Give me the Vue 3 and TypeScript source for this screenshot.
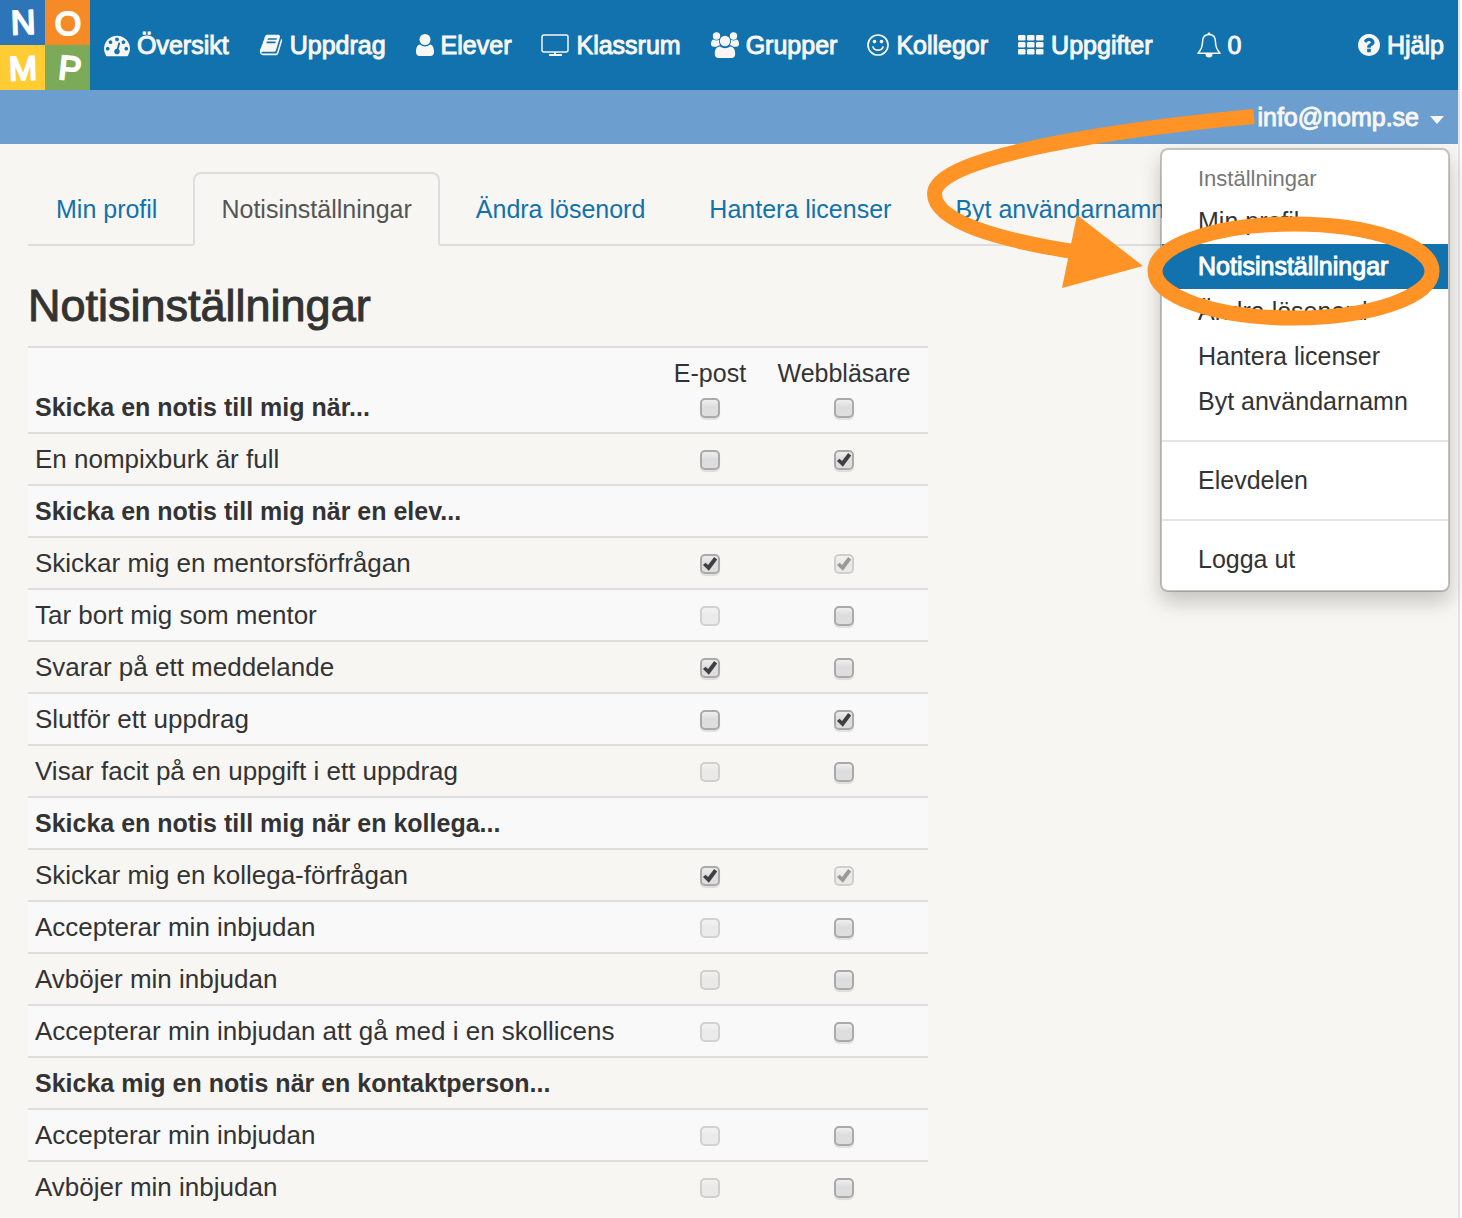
<script setup lang="ts">
import { reactive } from 'vue'

interface Box {
  checked: boolean
  disabled?: boolean
}
interface Row {
  label: string
  heading?: boolean
  email?: Box
  web?: Box
}

const nav = [
  { id: 'gauge', label: 'Översikt', width: 26 },
  { id: 'book', label: 'Uppdrag', width: 24 },
  { id: 'user', label: 'Elever', width: 18 },
  { id: 'screen', label: 'Klassrum', width: 28 },
  { id: 'group', label: 'Grupper', width: 28 },
  { id: 'smile', label: 'Kollegor', width: 22 },
  { id: 'grid', label: 'Uppgifter', width: 26 },
  { id: 'bell', label: '0', width: 24 },
]

const tabs = ['Min profil', 'Notisinställningar', 'Ändra lösenord', 'Hantera licenser', 'Byt användarnamn']
const active = 'Notisinställningar'

const off = (): Box => ({ checked: false })
const on = (): Box => ({ checked: true })
const locked = (checked = false): Box => ({ checked, disabled: true })

const all = reactive({ email: false, web: false })
const rows = reactive<Row[]>([
  { label: 'En nompixburk är full', email: off(), web: on() },
  { label: 'Skicka en notis till mig när en elev...', heading: true },
  { label: 'Skickar mig en mentorsförfrågan', email: on(), web: locked(true) },
  { label: 'Tar bort mig som mentor', email: locked(), web: off() },
  { label: 'Svarar på ett meddelande', email: on(), web: off() },
  { label: 'Slutför ett uppdrag', email: off(), web: on() },
  { label: 'Visar facit på en uppgift i ett uppdrag', email: locked(), web: off() },
  { label: 'Skicka en notis till mig när en kollega...', heading: true },
  { label: 'Skickar mig en kollega-förfrågan', email: on(), web: locked(true) },
  { label: 'Accepterar min inbjudan', email: locked(), web: off() },
  { label: 'Avböjer min inbjudan', email: locked(), web: off() },
  { label: 'Accepterar min inbjudan att gå med i en skollicens', email: locked(), web: off() },
  { label: 'Skicka mig en notis när en kontaktperson...', heading: true },
  { label: 'Accepterar min inbjudan', email: locked(), web: off() },
  { label: 'Avböjer min inbjudan', email: locked(), web: off() },
])
</script>

<template>
  <div class="page">
    <header>
      <nav class="topbar" aria-label="Huvudmeny">
        <a class="logo" href="#" aria-label="Nomp">
          <svg width="90" height="90" viewBox="0 0 90 90">
            <rect width="45" height="45" fill="#2e74b9" />
            <rect x="45" width="45" height="45" fill="#f68a27" />
            <rect y="45" width="45" height="45" fill="#ffcd33" />
            <rect x="45" y="45" width="45" height="45" fill="#7caa58" />
            <g class="letters">
              <text x="23" y="34" transform="rotate(-2 23 22)">N</text>
              <text x="68" y="35">O</text>
              <text x="23" y="80" transform="rotate(-2 23 68)">M</text>
              <text x="70" y="80" transform="rotate(6 70 68)">P</text>
            </g>
          </svg>
        </a>
        <a v-for="item in nav" :key="item.id" class="navlink" :class="item.id" href="#">
          <svg v-if="item.id === 'gauge'" :width="item.width" height="26" viewBox="0 0 1792 1792"><path d="M384 1152q0-53-37.500-90.500t-90.500-37.500-90.500 37.500-37.500 90.500 37.500 90.500 90.500 37.500 90.500-37.500 37.500-90.500zm192-448q0-53-37.500-90.500t-90.500-37.500-90.500 37.500-37.500 90.500 37.500 90.500 90.500 37.500 90.500-37.500 37.500-90.500zm428 481l101-382q6-26-7.500-48.500t-38.500-29.500-48 6.500-30 39.500l-101 382q-60 5-107 43.500t-63 98.500q-20 77 20 146t117 89 146-20 89-117q16-60-6-117t-72-91zm660-33q0-53-37.500-90.500t-90.500-37.500-90.500 37.500-37.500 90.500 37.500 90.500 90.500 37.500 90.500-37.500 37.500-90.500zm-640-640q0-53-37.500-90.500t-90.500-37.500-90.500 37.500-37.500 90.500 37.500 90.500 90.500 37.500 90.500-37.500 37.500-90.500zm448 192q0-53-37.500-90.500t-90.500-37.500-90.500 37.500-37.500 90.500 37.500 90.500 90.500 37.500 90.500-37.500 37.500-90.500zm320 448q0 261-141 483-19 29-54 29h-1402q-35 0-54-29-141-221-141-483 0-182 71-348t191-286 286-191 348-71 348 71 286 191 191 286 71 348z" /></svg>
          <svg v-else-if="item.id === 'book'" :width="item.width" height="24" viewBox="64 0 1664 1792"><path d="M1703 478q40 57 18 129l-275 906q-19 64-76.500 107.500t-122.500 43.500h-923q-77 0-148.500-53.500t-99.500-131.500q-24-67-2-127 0-4 3-27t4-37q1-8-3-21.500t-3-19.500q2-11 8-21t16.500-23.500 16.500-23.500q23-38 45-91.500t30-91.500q3-10 .5-30t-.5-28q3-11 17-28t17-23q21-36 42-92t25-90q1-9-2.500-32t.5-28q4-13 22-30.500t22-22.500q19-26 42.500-84.500t27.500-96.500q1-8-3-25.500t-2-26.500q2-8 9-18t18-23 17-21q8-12 16.500-30.500t15-35 16-36 19.500-32 26.500-23.500 36-11.500 47.500 5.500l-1 3q38-9 51-9h761q74 0 114 56t18 130l-274 906q-36 119-71.500 153.500t-128.500 34.500h-869q-27 0-38 15-11 16-1 43 24 70 144 70h923q29 0 56-15.500t35-41.500l300-987q7-22 5-57 38 15 59 43zm-1064 2q-4 13 2 22.500t20 9.500h608q13 0 25.500-9.500t16.500-22.500l21-64q4-13-2-22.500t-20-9.500h-608q-13 0-25.500 9.500t-16.500 22.500zm-83 256q-4 13 2 22.500t20 9.500h608q13 0 25.500-9.500t16.500-22.500l21-64q4-13-2-22.500t-20-9.500h-608q-13 0-25.500 9.500t-16.500 22.500z" /></svg>
          <svg v-else-if="item.id === 'user'" :width="item.width" height="22" viewBox="0 0 18 22"><circle cx="9" cy="5.500" r="5.500" /><path d="M4 10.500c3 2.600 7 2.600 10 0 3 .4 4 3.500 4 7.500 0 2.400-1.500 4-3.500 4h-11C1.500 22 0 20.400 0 18c0-4 1-7.100 4-7.500z" /></svg>
          <svg v-else-if="item.id === 'screen'" :width="item.width" height="22" viewBox="0 0 28 22"><rect x="1" y="1" width="26" height="17" rx="2" fill="none" stroke="#f8f6f2" stroke-width="1.500" /><path d="M13 18h2v2h6v2H8v-2h5z" /></svg>
          <svg v-else-if="item.id === 'group'" :width="item.width" height="26" viewBox="0 0 28 26"><circle cx="5.500" cy="4" r="3.700" /><circle cx="22.500" cy="4" r="3.700" /><path d="M2.500 7.500c2 1.300 4 1.200 5.600.3-.3 2 .1 3.800 1.200 5.400-1.500 0-2.700.6-3.700 1.600H3c-2 0-3-1-3-2.700 0-2.500.7-4.200 2.500-4.600zM25.500 7.500c-2 1.300-4 1.200-5.600.3.300 2-.1 3.800-1.200 5.400 1.500 0 2.700.6 3.700 1.600H25c2 0 3-1 3-2.700 0-2.500-.7-4.200-2.500-4.600z" /><circle cx="14" cy="9" r="5.200" /><path d="M9 14.600c3 2.300 7 2.300 10 0 4 0 5.200 3.800 5.200 7.400 0 2.400-1.500 4-3.700 4h-13C5.300 26 3.800 24.400 3.800 22c0-3.600 1.200-7.400 5.200-7.400z" /></svg>
          <svg v-else-if="item.id === 'smile'" :width="item.width" height="22" viewBox="0 0 22 22"><circle cx="11" cy="11" r="10" fill="none" stroke="#f8f6f2" stroke-width="1.700" /><circle cx="7.500" cy="7.600" r="1.800" /><circle cx="14.500" cy="7.600" r="1.800" /><path d="M6 13c1.500 4.200 8.500 4.200 10 0" fill="none" stroke="#f8f6f2" stroke-width="1.700" stroke-linecap="round" /></svg>
          <svg v-else-if="item.id === 'grid'" :width="item.width" height="20" viewBox="0 0 26 20"><template v-for="y in 3" :key="y"><rect v-for="x in 3" :key="x" :x="(x - 1) * 9" :y="(y - 1) * 7" width="7.500" height="5.500" rx="1.300" /></template></svg>
          <svg v-else :width="item.width" height="26" viewBox="0 0 24 26"><path d="M12 2.500c-4.500 0-6.500 3.500-6.500 7.500 0 6-2 8.500-4.500 11.200h22c-2.500-2.700-4.500-5.200-4.500-11.200 0-4-2-7.500-6.500-7.500z" fill="none" stroke="#f8f6f2" stroke-width="1.500" stroke-linejoin="round" /><circle cx="12" cy="1.800" r="1.400" /><path d="M8.500 22h7a3.500 3.500 0 0 1-7 0z" /></svg>
          <span>{{ item.label }}</span>
        </a>
        <a class="navlink help" href="#">
          <svg width="22" height="22" viewBox="128 128 1536 1536"><path d="M1024 1376v-192q0-14-9-23t-23-9h-192q-14 0-23 9t-9 23v192q0 14 9 23t23 9h192q14 0 23-9t9-23zm256-672q0-88-55.500-163t-138.500-116-170-41q-243 0-371 213-15 24 8 42l132 100q7 6 19 6 16 0 25-12 53-68 86-92 34-24 86-24 48 0 85.500 26t37.500 59q0 38-20 61t-68 45q-63 28-115.500 86.500t-52.500 125.500v36q0 14 9 23t23 9h192q14 0 23-9t9-23q0-19 21.500-49.500t54.500-49.500q32-18 49-28.500t46-35 44.500-48 28-60.500 12.500-81zm384 192q0 209-103 385.500t-279.500 279.500-385.500 103-385.500-103-279.500-279.500-103-385.500 103-385.500 279.500-279.500 385.500-103 385.500 103 279.500 279.500 103 385.500z" /></svg>
          <span>Hjälp</span>
        </a>
      </nav>
      <div class="userbar">
        <button type="button" class="account" aria-haspopup="true" aria-expanded="true">
          info@nomp.se<i class="caret"></i>
        </button>
        <div class="menu">
          <h2>Inställningar</h2>
          <ul>
            <li v-for="t in tabs" :key="t"><a href="#" :class="{ active: t === active }">{{ t }}</a></li>
          </ul>
          <hr />
          <ul><li><a href="#">Elevdelen</a></li></ul>
          <hr />
          <ul><li><a href="#">Logga ut</a></li></ul>
        </div>
      </div>
    </header>

    <main>
      <ul class="tabs">
        <li v-for="t in tabs" :key="t"><a href="#" :class="{ active: t === active }">{{ t }}</a></li>
      </ul>

      <h1>Notisinställningar</h1>

      <table>
        <thead>
          <tr>
            <th class="name" scope="col">Skicka en notis till mig när...</th>
            <th class="email" scope="col">
              <label for="all-email">E-post</label>
              <span class="cell"><input id="all-email" v-model="all.email" type="checkbox" /></span>
            </th>
            <th class="web" scope="col">
              <label for="all-web">Webbläsare</label>
              <span class="cell"><input id="all-web" v-model="all.web" type="checkbox" /></span>
            </th>
          </tr>
        </thead>
        <tbody>
          <tr v-for="(row, i) in rows" :key="i">
            <th v-if="row.heading" colspan="3" scope="colgroup">{{ row.label }}</th>
            <template v-else>
              <td>{{ row.label }}</td>
              <td><span class="cell"><input v-if="row.email" v-model="row.email.checked" type="checkbox" :disabled="row.email.disabled" :aria-label="`${row.label}, e-post`" /></span></td>
              <td><span class="cell"><input v-if="row.web" v-model="row.web.checked" type="checkbox" :disabled="row.web.disabled" :aria-label="`${row.label}, webbläsare`" /></span></td>
            </template>
          </tr>
        </tbody>
      </table>
    </main>

    <svg class="pointer" width="540" height="240" viewBox="918 100 540 240" aria-hidden="true">
      <g fill="none" stroke="#ff9326" stroke-width="15">
        <path d="M1254 116.500C1130 128 934 155 934.500 194C935 222 1000 240 1076 252" />
        <ellipse cx="1293.500" cy="271" rx="138.500" ry="47" />
      </g>
      <path d="M1077 215L1143 266L1062 288z" fill="#ff9326" />
    </svg>
  </div>
</template>

<style>
body {
  background: #fbfbfb;
}
</style>

<style scoped>
.page {
  position: relative;
  margin-right: 2px;
  padding-bottom: 6px;
  border-right: 2px solid #e4e4e6;
  background: #f7f6f2;
  color: #333;
  font: 26px/34px "Liberation Sans", Arial, sans-serif;
}
ul {
  margin: 0;
  padding: 0;
  list-style: none;
}
a {
  text-decoration: none;
}
.topbar,
.userbar,
.tabs,
th {
  font-size: 25px;
}
.topbar {
  display: flex;
  align-items: center;
  height: 90px;
  background: #1272ad;
}
.logo {
  height: 90px;
  margin-right: 14px;
}
.logo svg {
  display: block;
}
.letters {
  fill: #fff;
  stroke: #fff;
  stroke-width: 2px;
  stroke-linejoin: round;
  font-size: 34px;
  text-anchor: middle;
}
.navlink {
  display: flex;
  align-items: center;
  gap: 7px;
  margin-right: 30px;
  color: #f8f6f2;
  white-space: nowrap;
}
.navlink span,
.account {
  -webkit-text-stroke: 1px #f8f6f2;
}
.navlink svg {
  flex: none;
  fill: #f8f6f2;
}
.navlink.grid {
  margin-right: 44px;
}
.navlink.help {
  margin: 0 14px 0 auto;
}
.userbar {
  position: relative;
  display: flex;
  justify-content: flex-end;
  height: 54px;
  background: #6c9ecf;
}
.account {
  display: flex;
  align-items: center;
  gap: 11px;
  padding: 0 14px 0 0;
  border: 0;
  background: none;
  color: #f8f6f2;
  font: inherit;
}
.caret {
  margin-top: 6px;
  border: 7px solid transparent;
  border-top: 8px solid #f8f6f2;
  border-bottom: 0;
}
.menu {
  position: absolute;
  z-index: 1;
  top: 58px;
  right: 8px;
  box-sizing: border-box;
  width: 290px;
  padding: 8px 0;
  border: 2px solid rgba(0, 0, 0, 0.2);
  border-radius: 8px;
  background: #fff;
  background-clip: padding-box;
  box-shadow: 0 10px 20px rgba(0, 0, 0, 0.2);
}
.menu h2 {
  margin: 0;
  padding: 0 36px;
  color: #777;
  font-size: 22px;
  font-weight: 400;
  line-height: 41px;
}
.menu a {
  display: block;
  padding: 0 36px;
  color: #333;
  line-height: 45px;
  white-space: nowrap;
}
.menu a.active {
  background: #1272ad;
  color: #fff;
  -webkit-text-stroke: 1px #fff;
}
.menu hr {
  height: 2px;
  margin: 16px 0;
  border: 0;
  background: #e5e5e5;
}
main {
  padding: 28px 28px 0;
}
.tabs {
  display: flex;
  gap: 8px;
  border-bottom: 2px solid #ddd;
}
.tabs a {
  display: block;
  margin-bottom: -2px;
  padding: 18px 26px;
  border: 2px solid transparent;
  border-radius: 8px 8px 0 0;
  color: #1272ad;
  white-space: nowrap;
}
.tabs a.active {
  border-color: #ddd #ddd #f7f6f2;
  background: #f7f6f2;
  color: #555;
}
h1 {
  margin: 32px 0 12px;
  font-size: 45px;
  font-weight: 400;
  line-height: 56px;
  -webkit-text-stroke: 1px #333;
}
table {
  width: 900px;
  max-width: 100%;
  border-spacing: 0;
  table-layout: fixed;
}
th,
td {
  padding: 8px 7px;
  border-top: 2px solid #ddd;
  text-align: left;
  vertical-align: bottom;
}
thead tr,
tbody tr:nth-child(even) {
  background: #f9f9f9;
}
.email {
  width: 86px;
}
.web {
  width: 154px;
}
label {
  display: block;
  font-weight: 400;
  text-align: center;
}
.cell {
  display: flex;
  align-items: center;
  justify-content: center;
  height: 34px;
}
input {
  appearance: none;
  box-sizing: border-box;
  width: 20px;
  height: 20px;
  margin: 2px 0 0;
  border: 2px solid #aaa;
  border-radius: 5px;
  background: linear-gradient(#efefef, #ddd 45%, #dedede);
  box-shadow: 0 2px 1px rgba(0, 0, 0, 0.1);
}
input:checked::before {
  content: "";
  display: block;
  width: 16px;
  height: 16px;
  background: #3f3f3f;
  clip-path: polygon(6% 56%, 22% 42%, 38% 57%, 76% 6%, 95% 22%, 43% 92%);
}
input:disabled {
  opacity: 0.5;
  box-shadow: none;
}
.pointer {
  position: absolute;
  z-index: 2;
  top: 100px;
  right: 0;
  pointer-events: none;
}
</style>
